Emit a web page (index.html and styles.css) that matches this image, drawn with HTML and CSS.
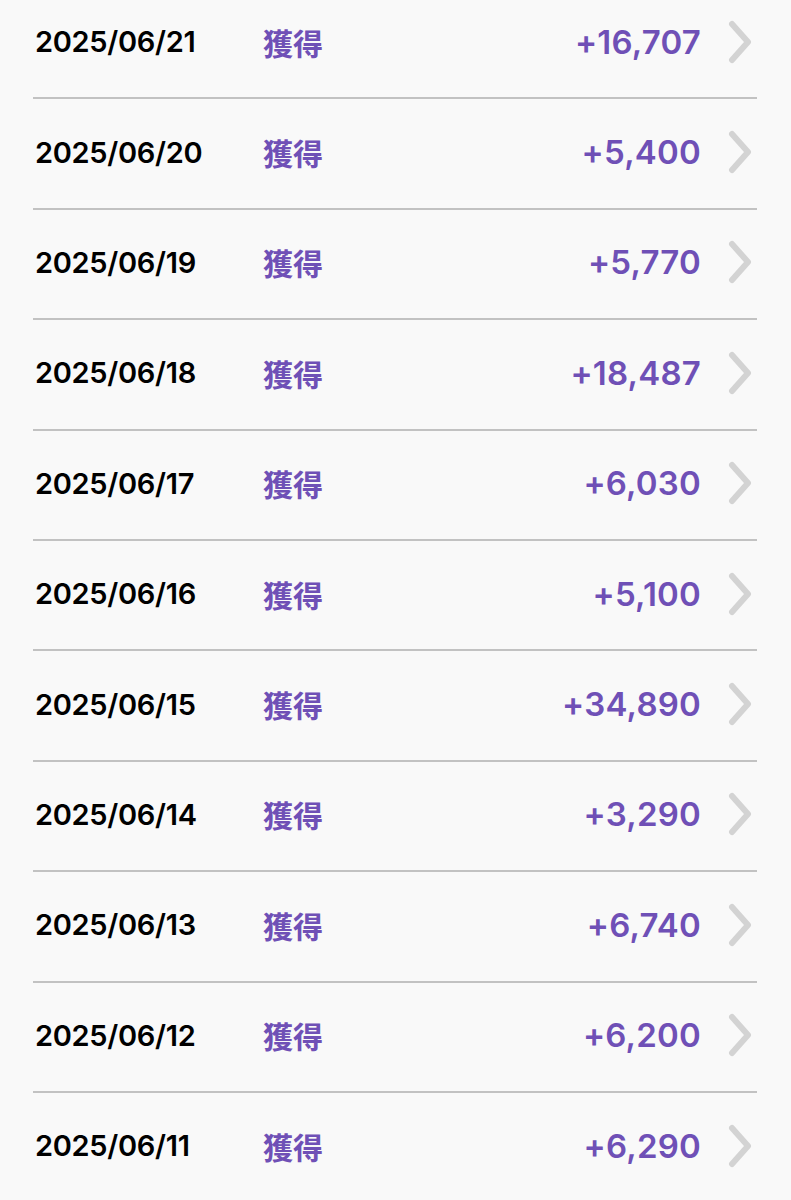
FILE: index.html
```html
<!DOCTYPE html>
<html lang="ja">
<head>
<meta charset="utf-8">
<link rel="stylesheet" href="styles.css">
</head>
<body>
<ul class="list">
  <li class="row"><span class="date">2025/06/21</span><span class="type">獲得</span><span class="amount">+16,707</span><svg class="chev" viewBox="0 0 24 44"><path d="M4 4 L20 22 L4 40"/></svg></li>
  <li class="row"><span class="date">2025/06/20</span><span class="type">獲得</span><span class="amount">+5,400</span><svg class="chev" viewBox="0 0 24 44"><path d="M4 4 L20 22 L4 40"/></svg></li>
  <li class="row"><span class="date">2025/06/19</span><span class="type">獲得</span><span class="amount">+5,770</span><svg class="chev" viewBox="0 0 24 44"><path d="M4 4 L20 22 L4 40"/></svg></li>
  <li class="row"><span class="date">2025/06/18</span><span class="type">獲得</span><span class="amount">+18,487</span><svg class="chev" viewBox="0 0 24 44"><path d="M4 4 L20 22 L4 40"/></svg></li>
  <li class="row"><span class="date">2025/06/17</span><span class="type">獲得</span><span class="amount">+6,030</span><svg class="chev" viewBox="0 0 24 44"><path d="M4 4 L20 22 L4 40"/></svg></li>
  <li class="row"><span class="date">2025/06/16</span><span class="type">獲得</span><span class="amount">+5,100</span><svg class="chev" viewBox="0 0 24 44"><path d="M4 4 L20 22 L4 40"/></svg></li>
  <li class="row"><span class="date">2025/06/15</span><span class="type">獲得</span><span class="amount">+34,890</span><svg class="chev" viewBox="0 0 24 44"><path d="M4 4 L20 22 L4 40"/></svg></li>
  <li class="row"><span class="date">2025/06/14</span><span class="type">獲得</span><span class="amount">+3,290</span><svg class="chev" viewBox="0 0 24 44"><path d="M4 4 L20 22 L4 40"/></svg></li>
  <li class="row"><span class="date">2025/06/13</span><span class="type">獲得</span><span class="amount">+6,740</span><svg class="chev" viewBox="0 0 24 44"><path d="M4 4 L20 22 L4 40"/></svg></li>
  <li class="row"><span class="date">2025/06/12</span><span class="type">獲得</span><span class="amount">+6,200</span><svg class="chev" viewBox="0 0 24 44"><path d="M4 4 L20 22 L4 40"/></svg></li>
  <li class="row"><span class="date">2025/06/11</span><span class="type">獲得</span><span class="amount">+6,290</span><svg class="chev" viewBox="0 0 24 44"><path d="M4 4 L20 22 L4 40"/></svg></li>
</ul>
</body>
</html>
```
FILE: styles.css
```css
html, body {
  margin: 0;
  padding: 0;
  background: #f9f9f9;
}
body {
  width: 791px;
  height: 1200px;
  overflow: hidden;
  font-family: Inter, "Noto Sans CJK JP", sans-serif;
}
.list {
  list-style: none;
  margin: -11px 34px 0 33px;
  padding: 0;
}
.row {
  display: flex;
  align-items: center;
  box-sizing: content-box;
  height: 105.4px;
  padding: 0 0 3px 2px;
  border-bottom: 2px solid #c2c2c2;
}
.date {
  width: 228px;
  flex: none;
  font-size: 29px;
  font-weight: 600;
  letter-spacing: -0.3px;
  color: #000;
}
.type {
  font-family: "Noto Sans CJK JP", sans-serif;
  font-size: 30px;
  font-weight: 700;
  color: #6f50b6;
}
.amount {
  margin-left: auto;
  margin-right: 27px;
  font-size: 33px;
  font-weight: 600;
  letter-spacing: 0.2px;
  color: #6f50b6;
}
.chev {
  width: 24px;
  height: 44px;
  margin-right: 5px;
  flex: none;
}
.chev path {
  fill: none;
  stroke: #d3d3d3;
  stroke-width: 6;
  stroke-linecap: round;
  stroke-linejoin: round;
}
```
